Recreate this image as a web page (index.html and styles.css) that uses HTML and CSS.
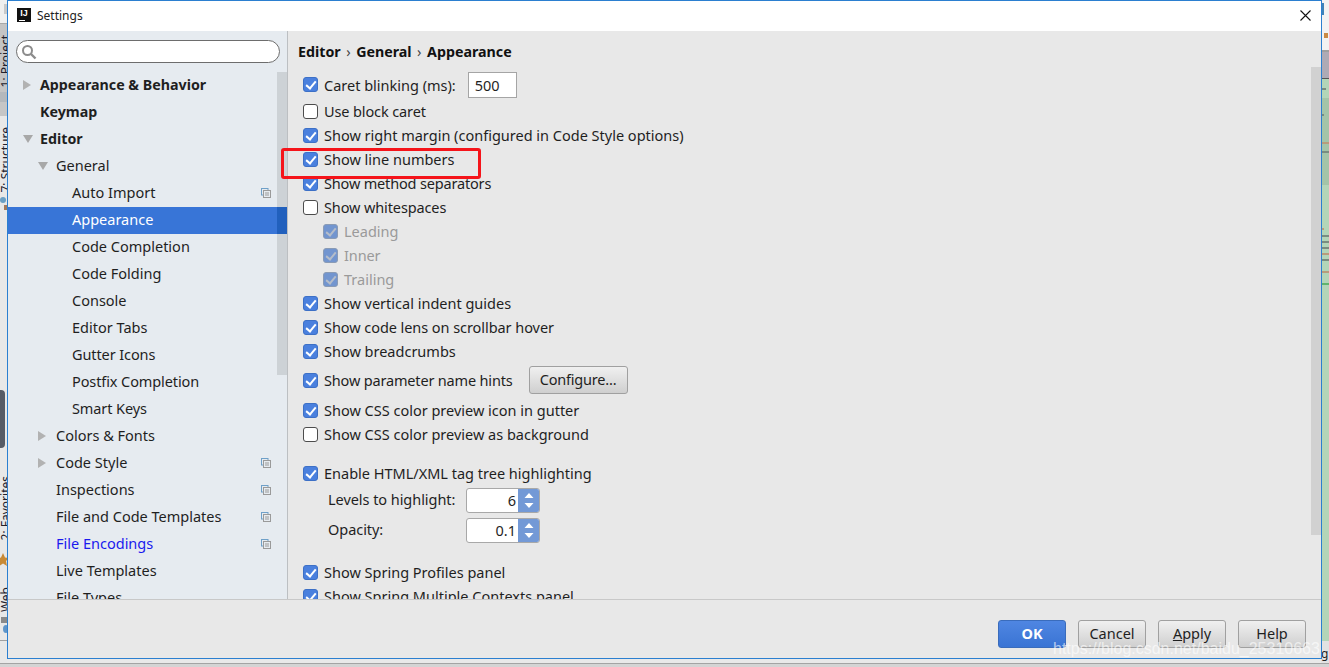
FILE: index.html
```html
<!DOCTYPE html>
<html lang="en">
<head>
<meta charset="utf-8">
<title>Settings</title>
<link rel="stylesheet" href="styles.css">
</head>
<body>
<div class="desktop">
  <div class="ide-left">
    <div class="il-top"><span class="il-patch"></span></div>
    <div class="il-gray"><span class="vtext">1: Project</span></div>
    <div class="il-mid"><span class="vtext">7: Structure</span></div>
    <div class="il-dots"><span class="dot-blue"></span><span class="dot-brown"></span></div>
    <div class="il-pill"></div>
    <div class="il-fav"><span class="vtext">2: Favorites</span></div>
    <svg class="il-star" width="8" height="14" viewBox="0 0 8 14"><path d="M3 0l2 4.500 4 .5-3 3 1 5-4-2.500-4 2.500 1-5-3-3 4-.5z" fill="#c98a35"/></svg>
    <div class="il-web"><span class="vtext">Web</span></div>
    <div class="il-foot"><span class="il-chip"></span><span class="il-ball"></span><span class="il-line"></span></div>
  </div>
  <div class="ide-right">
    <div class="ir-top"><i class="s s1"></i><i class="s s2"></i></div>
    <div class="ir-purple"></div>
    <div class="ir-code">
      <i class="shade"></i>
      <i class="c c1"></i><i class="c c2"></i><i class="c c3 tan"></i><i class="c c4"></i>
      <i class="c c5 tan"></i><i class="c c6"></i><i class="c c7"></i><i class="c c8"></i>
      <i class="c c9 tan"></i><i class="c c10"></i><i class="c c11 tan"></i><i class="c c12 grn"></i>
    </div>
    <div class="ir-foot">g</div>
  </div>
  <div class="ide-bottom"></div>

  <div class="dialog">
    <header class="titlebar">
      <span class="ij-logo"><span class="ij-text">IJ</span><span class="ij-bar"></span></span>
      <span class="title">Settings</span>
      <svg class="close" width="11" height="11" viewBox="0 0 11 11"><path d="M.5.500l10 10M10.500.500l-10 10" stroke="#111" stroke-width="1.100" fill="none"/></svg>
    </header>
    <div class="main">
      <aside class="sidebar">
        <div class="search">
          <svg width="16" height="16" viewBox="0 0 16 16"><circle cx="6.500" cy="6.500" r="4.500" fill="none" stroke="#8c8c8c" stroke-width="2"/><path d="M10 10l4.500 4.500" stroke="#8c8c8c" stroke-width="2.400"/></svg>
        </div>
        <div class="tree-wrap">
          <div class="tree-thumb"></div>
          <ul class="tree">
            <li class="row l0 bold"><span class="tri right"></span>Appearance &amp; Behavior</li>
            <li class="row l0 bold"><span class="tri none"></span>Keymap</li>
            <li class="row l0 bold"><span class="tri down"></span>Editor</li>
            <li class="row l1"><span class="tri down"></span>General</li>
            <li class="row l2">Auto Import<svg class="cfg" width="10" height="10" viewBox="0 0 10 10"><use href="#cp"/></svg></li>
            <li class="row l2 selected">Appearance</li>
            <li class="row l2">Code Completion</li>
            <li class="row l2">Code Folding</li>
            <li class="row l2">Console</li>
            <li class="row l2">Editor Tabs</li>
            <li class="row l2 narrow">Gutter Icons</li>
            <li class="row l2 narrow">Postfix Completion</li>
            <li class="row l2 narrow">Smart Keys</li>
            <li class="row l1"><span class="tri right"></span>Colors &amp; Fonts</li>
            <li class="row l1"><span class="tri right"></span>Code Style<svg class="cfg" width="10" height="10" viewBox="0 0 10 10"><use href="#cp"/></svg></li>
            <li class="row l1"><span class="tri none"></span>Inspections<svg class="cfg" width="10" height="10" viewBox="0 0 10 10"><use href="#cp"/></svg></li>
            <li class="row l1"><span class="tri none"></span>File and Code Templates<svg class="cfg" width="10" height="10" viewBox="0 0 10 10"><use href="#cp"/></svg></li>
            <li class="row l1 link"><span class="tri none"></span>File Encodings<svg class="cfg" width="10" height="10" viewBox="0 0 10 10"><use href="#cp"/></svg></li>
            <li class="row l1"><span class="tri none"></span>Live Templates</li>
            <li class="row l1"><span class="tri none"></span>File Types</li>
          </ul>
        </div>
      </aside>
      <section class="content">
        <div class="scroll-thumb"></div>
        <nav class="crumbs"><span>Editor</span><span class="sep">›</span><span>General</span><span class="sep">›</span><span>Appearance</span></nav>
        <div class="opts">
          <label class="opt first"><span class="cb on"></span><span class="txt">Caret blinking (ms):</span><span class="field">500</span></label>
          <label class="opt"><span class="cb"></span><span class="txt narrow">Use block caret</span></label>
          <label class="opt"><span class="cb on"></span><span class="txt">Show right margin (configured in Code Style options)</span></label>
          <label class="opt"><span class="cb on"></span><span class="txt">Show line numbers</span></label>
          <label class="opt"><span class="cb on"></span><span class="txt tight">Show method separators</span></label>
          <label class="opt"><span class="cb"></span><span class="txt narrow">Show whitespaces</span></label>
          <label class="opt sub off"><span class="cb on"></span><span class="txt">Leading</span></label>
          <label class="opt sub off"><span class="cb on"></span><span class="txt narrow">Inner</span></label>
          <label class="opt sub off"><span class="cb on"></span><span class="txt">Trailing</span></label>
          <label class="opt"><span class="cb on"></span><span class="txt">Show vertical indent guides</span></label>
          <label class="opt"><span class="cb on"></span><span class="txt slight">Show code lens on scrollbar hover</span></label>
          <label class="opt"><span class="cb on"></span><span class="txt">Show breadcrumbs</span></label>
          <label class="opt hints"><span class="cb on"></span><span class="txt tight">Show parameter name hints</span><button class="btn configure" type="button">Configure...</button></label>
          <label class="opt after-hints"><span class="cb on"></span><span class="txt">Show CSS color preview icon in gutter</span></label>
          <label class="opt"><span class="cb"></span><span class="txt">Show CSS color preview as background</span></label>
          <label class="opt gap"><span class="cb on"></span><span class="txt">Enable HTML/XML tag tree highlighting</span></label>
          <div class="spin-row"><span class="spin-label">Levels to highlight:</span><span class="spin"><span class="spin-val">6</span><span class="spin-btn"><svg width="10" height="17" viewBox="0 0 10 17"><path d="M5 1l4.500 5h-9zM5 16l4.500-5h-9z" fill="#fff"/></svg></span></span></div>
          <div class="spin-row"><span class="spin-label">Opacity:</span><span class="spin"><span class="spin-val">0.1</span><span class="spin-btn"><svg width="10" height="17" viewBox="0 0 10 17"><path d="M5 1l4.500 5h-9zM5 16l4.500-5h-9z" fill="#fff"/></svg></span></span></div>
          <label class="opt gap"><span class="cb on"></span><span class="txt">Show Spring Profiles panel</span></label>
          <label class="opt"><span class="cb on"></span><span class="txt">Show Spring Multiple Contexts panel</span></label>
        </div>
      </section>
    </div>
    <footer class="footer">
      <button class="btn ok" type="button">OK</button>
      <button class="btn" type="button">Cancel</button>
      <button class="btn" type="button"><u>A</u>pply</button>
      <button class="btn" type="button">Help</button>
    </footer>
    <div class="redbox"></div>
  </div>
  <div class="watermark">https://blog.csdn.net/baidu_25310663</div>
</div>
<svg class="defs" width="0" height="0"><defs><g id="cp"><rect x="0.500" y="0.500" width="6.500" height="6.500" fill="none" stroke="#6fa0c8"/><rect x="2.500" y="2.500" width="7" height="7" fill="#e6ebf0" stroke="#9a9a9a"/><path d="M4 5h4M4 7h4" stroke="#9a9a9a"/></g></defs></svg>
</body>
</html>
```
FILE: styles.css
```css
* { box-sizing: border-box; }
html, body { margin: 0; padding: 0; }
body { width: 1329px; height: 667px; overflow: hidden; font-family: "Noto Sans", "Open Sans", sans-serif; font-size: 14px; color: #1f1f1f; }
ul { list-style: none; margin: 0; padding: 0; }
.defs { position: absolute; }

.desktop { position: relative; width: 1329px; height: 667px; background: #e9e9e9; overflow: hidden; }

/* IDE peeking out behind the dialog */
.ide-left { position: absolute; left: 0; top: 0; width: 7px; height: 663px; display: flex; flex-direction: column; overflow: hidden; background: #e8e8e8; }
.il-top { height: 24px; background: #efefef; padding: 4px 0 0 4px; border-bottom: 1px solid #a8a8a8; flex: none; }
.il-patch { display: block; width: 3px; height: 10px; background: #c9c9c9; }
.il-gray { height: 92px; background: linear-gradient(#c4c4c4 0 68px, #b4b8bc 68px 78px, #c6c6c6 78px); flex: none; position: relative; }
.il-mid { height: 78px; flex: none; position: relative; }
.il-dots { height: 205px; flex: none; position: relative; }
.dot-blue { position: absolute; left: 0; top: 3px; width: 6px; height: 6px; border-radius: 50%; background: #6a9fc4; }
.dot-brown { position: absolute; left: 4px; top: 11px; width: 3px; height: 5px; background: #a57a5c; }
.il-pill { position: absolute; left: -6px; top: 390px; width: 11px; height: 58px; border-radius: 4px; background: #565b66; }
.il-fav { position: absolute; left: 0; top: 470px; height: 70px; width: 7px; }
.il-star { position: absolute; left: 0; top: 553px; }
.il-web { position: absolute; left: 0; top: 580px; height: 32px; width: 7px; }
.il-foot { position: absolute; left: 0; top: 617px; width: 7px; height: 46px; }
.il-chip { position: absolute; left: 1px; top: 0; width: 6px; height: 6px; background: #8a8a8a; }
.il-ball { position: absolute; left: 3px; top: 8px; width: 6px; height: 8px; border-radius: 50%; background: #5f95c9; }
.il-line { position: absolute; left: 0; top: 23px; width: 7px; height: 1px; background: #a0a0a0; }
.vtext { position: absolute; left: -1px; bottom: 0; writing-mode: vertical-rl; transform: rotate(180deg); font-size: 12px; line-height: 13px; white-space: nowrap; color: #22202a; }
.il-gray .vtext { bottom: 29px; }
.il-mid .vtext { bottom: 2px; }

.ide-right { position: absolute; right: 0; top: 0; width: 8px; height: 667px; display: flex; flex-direction: column; }
.ir-top { height: 52px; background: #f2f2f2; border-bottom: 2px solid #9f9f9f; flex: none; position: relative; }
.s { position: absolute; left: 1px; width: 2px; background: #3f83b8; }
.s1 { top: 3px; height: 12px; }
.s2 { top: 33px; height: 5px; left: 3px; width: 4px; background: #c98a45; }
.ir-purple { height: 27px; background: #aeaab5; border-bottom: 1px solid #555; flex: none; }
.ir-code { flex: 1; background: #b3d5b8; position: relative; }
.ir-foot { height: 26px; flex: none; background: #e2e2e2; font-size: 12px; line-height: 18px; padding-top: 4px; color: #222; }
.shade { position: absolute; left: 0; top: 19px; width: 8px; height: 87px; background: #a4c4a8; }
.c { position: absolute; left: 0; width: 8px; height: 2px; background: #7a8c80; }
.tan { background: #b89c7c; }
.grn { background: #62b46e; }
.c1 { top: 9px; width: 5px; }
.c2 { top: 35px; width: 3px; }
.c3 { top: 63px; }
.c4 { top: 72px; }
.c5 { top: 149px; width: 3px; }
.c6 { top: 156px; }
.c7 { top: 162px; }
.c8 { top: 168px; }
.c9 { top: 174px; }
.c10 { top: 180px; }
.c11 { top: 192px; }
.c12 { top: 204px; }

.ide-bottom { position: absolute; left: 0; bottom: 0; width: 1329px; height: 4px; background: #d4d4d4; border-top: 1px solid #a4a4a4; }

/* Dialog */
.dialog { position: absolute; left: 7px; top: 0; width: 1315px; height: 659px; border: 1px solid #2b7fd0; background: #e8e8e8; display: flex; flex-direction: column; overflow: hidden; }
.titlebar { height: 30px; flex: none; background: #fff; display: flex; align-items: center; padding: 0 10px 2px 9px; }
.ij-logo { width: 14px; height: 14px; background: #111; display: flex; flex-direction: column; align-items: center; color: #fff; flex: none; margin-right: 6px; position: relative; }
.ij-text { font: bold 9px/10px "Liberation Sans", sans-serif; }
.ij-bar { position: absolute; left: 2px; bottom: 1px; width: 6px; height: 1px; background: #fff; }
.title { font-size: 12px; flex: 1; color: #222; }
.close { flex: none; }

.main { flex: 1; display: flex; min-height: 0; }
.sidebar { width: 280px; flex: none; background: #e6ebf0; border-right: 1px solid #bcbfc2; display: flex; flex-direction: column; }
.search { margin: 9px 7px 0 8px; height: 23px; background: #fff; border: 1px solid #6d6d6d; border-radius: 12px; padding: 3px 0 0 4px; flex: none; }
.search svg { display: block; }
.tree-wrap { position: relative; flex: 1; padding-top: 9px; overflow: hidden; }
.tree-thumb { position: absolute; right: 0; top: 9px; width: 10px; height: 303px; background: #cdd2d6; }
.tree { position: relative; }
.row { height: 27px; line-height: 25px; padding-bottom: 2px; display: flex; align-items: center; white-space: nowrap; position: relative; font-size: 14.500px; }
.row.narrow { letter-spacing: -0.100px; }
.l0 { padding-left: 15px; }
.l1 { padding-left: 30px; }
.l2 { padding-left: 64px; }
.bold { font-weight: 700; font-size: 14.250px; padding-left: 15px; }
.tri { width: 17px; flex: none; height: 10px; position: relative; }
.l1 .tri { width: 18px; }
.tri::before { content: ""; position: absolute; left: 0; top: 0; border-style: solid; border-color: transparent; }
.tri.right::before { border-width: 5px 0 5px 8px; border-left-color: #b2b2b2; }
.tri.down::before { border-width: 8px 5px 0 5px; border-top-color: #a8a8a8; top: 1px; }
.tri.none::before { display: none; }
.selected { background: #3875d7; color: #fff; }
.selected::after { content: ""; position: absolute; right: 0; top: 0; width: 10px; height: 27px; background: #2160bd; }
.link { color: #1a1aee; }
.cfg { position: absolute; left: 253px; top: 8px; }

/* Content */
.content { flex: 1; position: relative; min-width: 0; overflow: hidden; padding: 0 0 0 10px; }
.scroll-thumb { position: absolute; right: 0; top: 36px; width: 10px; height: 468px; background: #d1d1d1; }
.crumbs { position: relative; height: 40px; display: flex; align-items: center; gap: 5.500px; font-weight: 700; font-size: 14.250px; color: #111; }
.crumbs .sep { font-weight: 400; color: #444; }
.opts { position: relative; padding-left: 5px; }
.opt { height: 24px; display: flex; align-items: center; white-space: nowrap; font-size: 14.500px; }
.opt.first { height: 27px; margin-bottom: 1px; }
.opt.hints { height: 34px; }
.opt.after-hints { margin-top: 1px; }
.opt.gap { margin-top: 15px; }
.opt.sub { padding-left: 20px; }
.tight { letter-spacing: -0.170px; }
.narrow { letter-spacing: -0.120px; }
.slight { letter-spacing: -0.060px; }
.cb { width: 15px; height: 15px; border-radius: 3px; border: 1px solid #4c4c4c; background: #fff; flex: none; margin-right: 6px; position: relative; }
.cb.on { background: #4a80de; border-color: #3d70c6; }
.cb.on::after { content: ""; position: absolute; left: 4px; top: 1px; width: 4px; height: 8px; border: solid #fff; border-width: 0 2px 2px 0; transform: rotate(40deg); }
.off .txt { color: #9a9a9a; }
.off .cb { background: #7295cf; border-color: #8a9bb5; }
.off .cb::after { border-color: #b5bdc9; }
.field { width: 49px; height: 26px; margin-left: 12px; background: #fff; border: 1px solid #a5a5a5; line-height: 24px; padding-left: 6px; }
.btn { height: 28px; width: 68px; border: 1px solid #a0a0a0; border-radius: 3px; background: linear-gradient(#f0f0f0, #cfcfcf); font: inherit; font-size: 14.500px; color: #1f1f1f; padding: 0 0 2px; }
.configure { width: 99px; margin-left: 16px; letter-spacing: -0.200px; }
.spin-row { height: 30px; display: flex; align-items: center; padding-left: 25px; font-size: 14.500px; }
.spin-label { width: 138px; flex: none; padding-bottom: 2px; letter-spacing: -0.050px; }
.spin { width: 74px; height: 25px; display: flex; border: 1px solid #a8a8a8; border-radius: 3px; overflow: hidden; background: #fff; }
.spin-val { flex: 1; text-align: right; line-height: 22px; padding-right: 2px; }
.spin-btn { width: 21px; background: #7399d6; display: flex; align-items: center; justify-content: center; flex: none; }
.redbox { position: absolute; left: 273px; top: 147px; width: 200px; height: 31px; border: 3px solid #f5141a; border-radius: 3px; }

.footer { height: 59px; flex: none; border-top: 1px solid #c8c8c8; display: flex; justify-content: flex-end; align-items: flex-start; gap: 12px; padding: 20px 15px 0 0; }
.btn.ok { background: linear-gradient(#4f86e2, #3a74d4); border-color: #3a6cbc; color: #fff; font-weight: 700; }
.watermark { position: absolute; left: 1053px; top: 639px; font: 16px/20px "Liberation Sans", sans-serif; color: rgba(255,255,255,.62); white-space: nowrap; pointer-events: none; }
```
